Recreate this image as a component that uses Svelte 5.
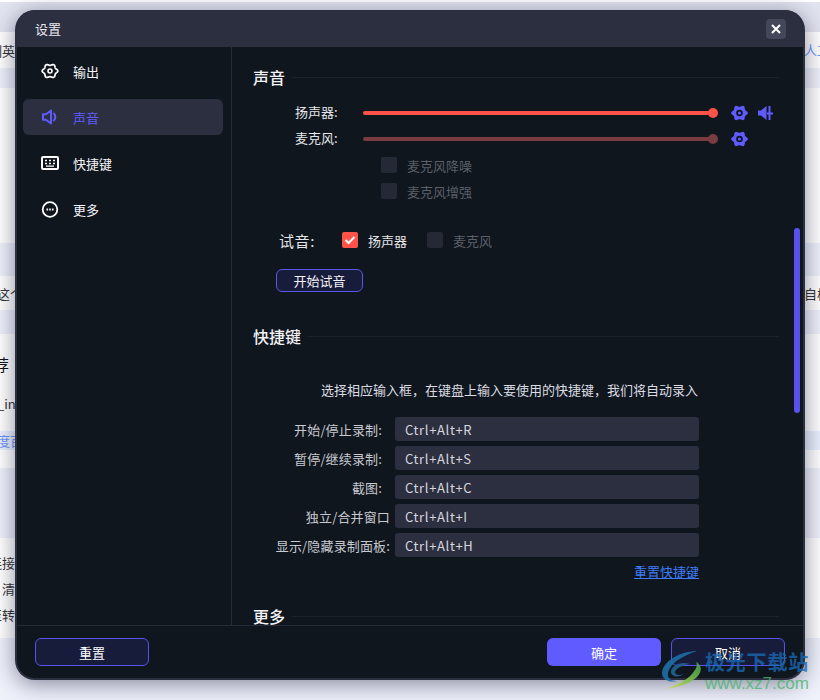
<script>
    const shortcuts = [
        { label: '开始/停止录制:', keys: 'Ctrl+Alt+R' },
        { label: '暂停/继续录制:', keys: 'Ctrl+Alt+S' },
        { label: '截图:', keys: 'Ctrl+Alt+C' },
        { label: '独立/合并窗口', keys: 'Ctrl+Alt+I', tight: true },
        { label: '显示/隐藏录制面板:', keys: 'Ctrl+Alt+H', tight: true }
    ];

    // six lobed outline shared by the gear icons
    function lobes(rx, ry, amp) {
        let d = '';
        for (let i = 0; i < 72; i++) {
            const a = (i / 72) * Math.PI * 2;
            const k = 1 + amp * Math.cos(6 * a);
            const x = 8.5 + rx * k * Math.cos(a);
            const y = 8 + ry * k * Math.sin(a);
            d += (i ? 'L' : 'M') + x.toFixed(2) + ' ' + y.toFixed(2);
        }
        return d + 'Z';
    }
    const navGear = lobes(7, 6.4, 0.12);
    const blueGear = lobes(7.4, 7.1, 0.13);
</script>

<div class="page">
    <div class="back">
        <div class="band lav h32"></div>
        <div class="band white h36"><span class="l">制英</span><span class="r blue">人工</span></div>
        <div class="band pale h20"></div>
        <div class="band white h155"></div>
        <div class="band pale h33"></div>
        <div class="band white h34"><span class="l3">这个</span><span class="r">自校</span></div>
        <div class="band pale h24"></div>
        <div class="band white h134">
            <span class="l big">荐</span>
            <span class="l3">_in</span>
            <span class="l3 blue tint">度百</span>
        </div>
        <div class="band pale h70"></div>
        <div class="band white h100">
            <span class="l">连接</span>
            <span class="l2">清</span>
            <span class="l">至转</span>
        </div>
    </div>

    <div class="modal">
        <header>
            <span>设置</span>
            <button class="close" aria-label="关闭">
                <svg width="10" height="10" viewBox="0 0 10 10"><path d="M1 1l8 8M9 1l-8 8" stroke="#fff" stroke-width="2"/></svg>
            </button>
        </header>

        <div class="body">
            <nav>
                <div class="item">
                    <svg width="18" height="16" viewBox="0 0 17 16"><path d={navGear} fill="none" stroke="#fff" stroke-width="1.700" stroke-linejoin="round"/><circle cx="8.500" cy="8" r="2" fill="none" stroke="#fff" stroke-width="1.600"/></svg>
                    输出
                </div>
                <div class="item active">
                    <svg width="18" height="16" viewBox="0 0 18 16"><path d="M2 5.200h3L10 1.500v13L5 10.800H2z" fill="none" stroke="#5f5bff" stroke-width="2" stroke-linejoin="round"/><path d="M13 4.500q2.600 3.500 0 7" fill="none" stroke="#5f5bff" stroke-width="2" stroke-linecap="round"/></svg>
                    声音
                </div>
                <div class="item">
                    <svg width="18" height="14" viewBox="0 0 18 14"><rect x="1" y="1" width="16" height="12" rx="1" fill="none" stroke="#fff" stroke-width="2"/><path d="M4 4.500h2M8 4.500h2M12 4.500h2M4 7.500h2M8 7.500h2M12 7.500h2" stroke="#fff" stroke-width="1.600"/><path d="M5 10.200h8" stroke="#fff" stroke-width="1.200"/></svg>
                    快捷键
                </div>
                <div class="item">
                    <svg width="18" height="17" viewBox="0 0 18 17"><circle cx="9" cy="8.500" r="7.300" fill="none" stroke="#fff" stroke-width="1.800"/><path d="M5.500 8.500h1.600M8.200 8.500h1.600M10.900 8.500h1.600" stroke="#fff" stroke-width="1.800"/></svg>
                    更多
                </div>
            </nav>

            <main>
                <section class="sound">
                    <h2>声音</h2>
                    <div class="slider-row">
                        <label>扬声器:</label>
                        <div class="track"><i class="thumb"></i></div>
                        <svg class="g" width="17" height="16" viewBox="0 0 17 16"><path d={blueGear} fill="#5f5bff"/><circle cx="8.500" cy="8" r="3.300" fill="#0f161e"/><circle cx="8.500" cy="8" r="1.600" fill="#5f5bff"/></svg>
                        <svg class="v" width="16" height="14" viewBox="0 0 16 14"><path d="M0 4.500h3L8.500 0v14L3 9.500H0z" fill="#5f5bff"/><path d="M11.500 0v14" stroke="#5f5bff" stroke-width="2"/><path d="M9 7.500h6" stroke="#5f5bff" stroke-width="2"/></svg>
                    </div>
                    <div class="slider-row mic">
                        <label>麦克风:</label>
                        <div class="track"><i class="thumb"></i></div>
                        <svg class="g" width="17" height="16" viewBox="0 0 17 16"><path d={blueGear} fill="#5f5bff"/><circle cx="8.500" cy="8" r="3.300" fill="#0f161e"/><circle cx="8.500" cy="8" r="1.600" fill="#5f5bff"/></svg>
                    </div>
                    <div class="opts">
                        <div class="opt"><i class="box"></i>麦克风降噪</div>
                        <div class="opt"><i class="box"></i>麦克风增强</div>
                    </div>
                    <div class="test">
                        <span class="test-label">试音:</span>
                        <i class="box on">
                            <svg width="12" height="10" viewBox="0 0 12 10"><path d="M1.500 5l3 3 6-6" fill="none" stroke="#fff" stroke-width="2"/></svg>
                        </i>
                        <span class="on-text">扬声器</span>
                        <i class="box second"></i>
                        <span class="off-text">麦克风</span>
                    </div>
                    <button class="start">开始试音</button>
                </section>

                <section class="keys">
                    <h2>快捷键</h2>
                    <p class="hint">选择相应输入框，在键盘上输入要使用的快捷键，我们将自动录入</p>
                    <div class="list">
                        {#each shortcuts as s}
                            <div class="key-row">
                                <span class="name" class:tight={s.tight}>{s.label}</span>
                                <div class="input">{s.keys}</div>
                            </div>
                        {/each}
                    </div>
                    <div class="reset-link"><a href="#top">重置快捷键</a></div>
                </section>

                <section class="more">
                    <h2>更多</h2>
                </section>

                <div class="scrollbar"></div>
            </main>
        </div>

        <footer>
            <button class="btn ghost">重置</button>
            <div class="right">
                <button class="btn solid">确定</button>
                <button class="btn ghost">取消</button>
            </div>
        </footer>
    </div>

    <div class="mark">
        <svg width="46" height="42" viewBox="0 0 46 42">
            <defs>
                <linearGradient id="leaf" x1="1" y1="0" x2="0" y2="1">
                    <stop offset="0" stop-color="#3fa24a"/>
                    <stop offset=".6" stop-color="#8cc44a"/>
                    <stop offset="1" stop-color="#e0dc55"/>
                </linearGradient>
            </defs>
            <path d="M37 3C22 3 3 12 2 25c0 7 8 10 15 8-8 0-11-5-8-11C13 13 25 7 37 3Z" fill="#1d6ea5" opacity=".9"/>
            <path d="M30 16c-10-3-19 2-19 8 0 5 8 6 13 2-4 2-9 1-9-2 1-4 8-7 15-8Z" fill="#215f8c" opacity=".95"/>
            <path d="M36 14c8 4 6 14-6 20-8 4-18 6-24 7 10-4 20-8 26-15 4-5 6-8 4-12Z" fill="url(#leaf)" opacity=".9"/>
        </svg>
        <div class="mark-text">
            <div class="cn">极光下载站</div>
            <div class="en">www.xz7.com</div>
        </div>
    </div>
</div>

<style>
    :global(body) {
        margin: 0;
        font-family: "Noto Sans CJK SC", "Noto Sans", sans-serif;
    }
    .page {
        position: relative;
        width: 820px;
        height: 700px;
        overflow: hidden;
        background: #eff2fb;
    }
    .back {
        display: flex;
        flex-direction: column;
        font-size: 13px;
        color: #333;
    }
    .band {
        display: flex;
        flex-direction: column;
        justify-content: center;
        position: relative;
    }
    .lav { background: #e2e4f0; border-top: 2px solid #fff; box-sizing: border-box; }
    .white { background: #fff; }
    .pale { background: #eef0fa; }
    .h32 { height: 32px; }
    .h36 { height: 36px; }
    .h20 { height: 20px; }
    .h155 { height: 155px; }
    .h33 { height: 33px; }
    .h34 { height: 34px; }
    .h24 { height: 24px; }
    .h134 { height: 134px; gap: 18px; }
    .h70 { height: 70px; }
    .h100 { height: 100px; gap: 7px; }
    .l { margin-left: -11px; white-space: nowrap; }
    .l2 { margin-left: 2px; }
    .l3 { margin-left: -3px; white-space: nowrap; }
    .big { font-size: 16px; margin-left: -7px; color: #111; }
    .r { position: absolute; left: 804px; top: 8px; white-space: nowrap; }
    .blue { color: #6d94f5; }
    .tint { background: #eaf0fe; }

    .modal {
        position: absolute;
        left: 15px;
        top: 10px;
        width: 790px;
        height: 670px;
        box-sizing: border-box;
        display: flex;
        flex-direction: column;
        background: #0f161e;
        border: 2px solid #2c2f40;
        border-top: 0;
        border-radius: 20px;
        overflow: hidden;
        box-shadow: 0 4px 22px rgba(25, 25, 60, .5);
        color: #fff;
    }
    header {
        height: 37px;
        flex: none;
        display: flex;
        align-items: center;
        justify-content: space-between;
        background: #2c2f40;
        padding: 0 17px 0 18px;
        font-size: 13px;
        color: #e8e8ee;
    }
    .close {
        width: 20px;
        height: 20px;
        padding: 0;
        border: 0;
        border-radius: 4px;
        background: #44475a;
        display: flex;
        align-items: center;
        justify-content: center;
    }
    .body {
        flex: 1;
        min-height: 0;
        display: flex;
    }
    nav {
        width: 215px;
        flex: none;
        box-sizing: border-box;
        border-right: 1px solid #262b38;
        padding: 6px 8px 0 6px;
        display: flex;
        flex-direction: column;
        gap: 10px;
    }
    .item {
        height: 36px;
        display: flex;
        align-items: center;
        gap: 14px;
        padding-left: 18px;
        border-radius: 6px;
        font-size: 13px;
        color: #f4f4f8;
    }
    .item svg {
        width: 18px;
        flex: none;
    }
    .active {
        background: #2c2f40;
        color: #5f5bff;
    }
    main {
        flex: 1;
        min-width: 0;
        position: relative;
        overflow: hidden;
        padding: 18px 24px 0 21px;
    }
    h2 {
        margin: 0;
        height: 24px;
        display: flex;
        align-items: center;
        gap: 7px;
        font-size: 16px;
        font-weight: 500;
        color: #f2f2f5;
    }
    h2::after {
        content: '';
        flex: 1;
        height: 1px;
        background: #1c222c;
    }
    .slider-row {
        height: 26px;
        display: flex;
        align-items: center;
        font-size: 13px;
        color: #e6e6ea;
    }
    .sound h2 { margin-bottom: 11px; }
    .slider-row label {
        width: 42px;
        margin: 0 26px 2px 42px;
        line-height: 20px;
        white-space: nowrap;
    }
    .track {
        width: 350px;
        height: 4px;
        border-radius: 2px;
        background: #ff5349;
        position: relative;
    }
    .thumb {
        position: absolute;
        right: -5px;
        top: -3px;
        width: 10px;
        height: 10px;
        border-radius: 50%;
        background: #ff5349;
    }
    .mic .track, .mic .thumb { background: #7a3c40; }
    .g { margin-left: 18px; }
    .v { margin-left: 10px; }
    .opts {
        margin: 5px 0 0 128px;
        display: flex;
        flex-direction: column;
        gap: 10px;
    }
    .opt {
        height: 16px;
        display: flex;
        align-items: center;
        gap: 10px;
        font-size: 13px;
        color: #5b5f68;
    }
    .box {
        width: 16px;
        height: 16px;
        flex: none;
        border-radius: 2px;
        background: #242935;
        display: flex;
        align-items: center;
        justify-content: center;
    }
    .box.on { background: #ff5349; }
    .test {
        margin: 33px 0 0 26px;
        height: 16px;
        display: flex;
        align-items: center;
        font-size: 13px;
    }
    .test-label {
        width: 63px;
        font-size: 15px;
        letter-spacing: .6px;
        color: #e6e6ea;
    }
    .on-text {
        margin-left: 10px;
        color: #e6e6ea;
    }
    .second { margin-left: 20px; }
    .off-text {
        margin-left: 10px;
        color: #5b5f68;
    }
    .start {
        display: block;
        margin: 21px 0 0 23px;
        width: 87px;
        height: 23px;
        padding: 0;
        border: 1px solid #5a56e8;
        border-radius: 6px;
        background: #171c3a;
        color: #f2f2f5;
        font: inherit;
        font-size: 13px;
    }
    .keys { margin-top: 32px; }
    .hint {
        margin: 32px 0 0;
        width: 445px;
        text-align: right;
        font-size: 13px;
        line-height: 20px;
        color: #dcdce2;
    }
    .list {
        margin-top: 17px;
        width: 446px;
        display: flex;
        flex-direction: column;
        gap: 5px;
    }
    .key-row {
        height: 24px;
        display: flex;
        align-items: center;
        justify-content: flex-end;
        font-size: 13px;
        color: #c9c9d0;
    }
    .name {
        margin-right: 13px;
        letter-spacing: .15px;
        white-space: nowrap;
    }
    .name.tight { margin-right: 5px; }
    .input {
        width: 294px;
        height: 24px;
        padding-left: 10px;
        flex: none;
        border-radius: 3px;
        background: #2c2f40;
        line-height: 25px;
        letter-spacing: .65px;
        color: #d6d6de;
    }
    .reset-link {
        width: 446px;
        margin-top: 5px;
        text-align: right;
        font-size: 13px;
        line-height: 20px;
    }
    .reset-link a { color: #3f7bf6; }
    .more { margin-top: 22px; }
    .scrollbar {
        position: absolute;
        right: 3px;
        top: 181px;
        width: 6px;
        height: 185px;
        border-radius: 3px;
        background: #5652ea;
    }
    footer {
        height: 53px;
        flex: none;
        box-sizing: border-box;
        border-top: 1px solid #262b38;
        padding: 12px 18px 0 18px;
        display: flex;
        justify-content: space-between;
        align-items: flex-start;
    }
    .right {
        display: flex;
        gap: 10px;
    }
    .btn {
        width: 114px;
        height: 28px;
        padding: 0;
        border-radius: 6px;
        font: inherit;
        font-size: 13px;
        color: #fff;
    }
    .ghost {
        border: 1px solid #5652ea;
        background: #171c3a;
    }
    .solid {
        border: 0;
        background: #5f5bff;
    }
    .mark {
        position: absolute;
        left: 660px;
        top: 648px;
        display: flex;
    }
    .mark-text { margin-left: -1px; padding-top: 1px; }
    .cn {
        font-size: 20px;
        line-height: 26px;
        font-weight: 700;
        letter-spacing: .8px;
        color: rgba(26, 106, 180, .8);
    }
    .en {
        font-size: 17px;
        line-height: 18px;
        font-family: "Liberation Sans", sans-serif;
        color: rgba(70, 180, 110, .8);
    }
</style>
